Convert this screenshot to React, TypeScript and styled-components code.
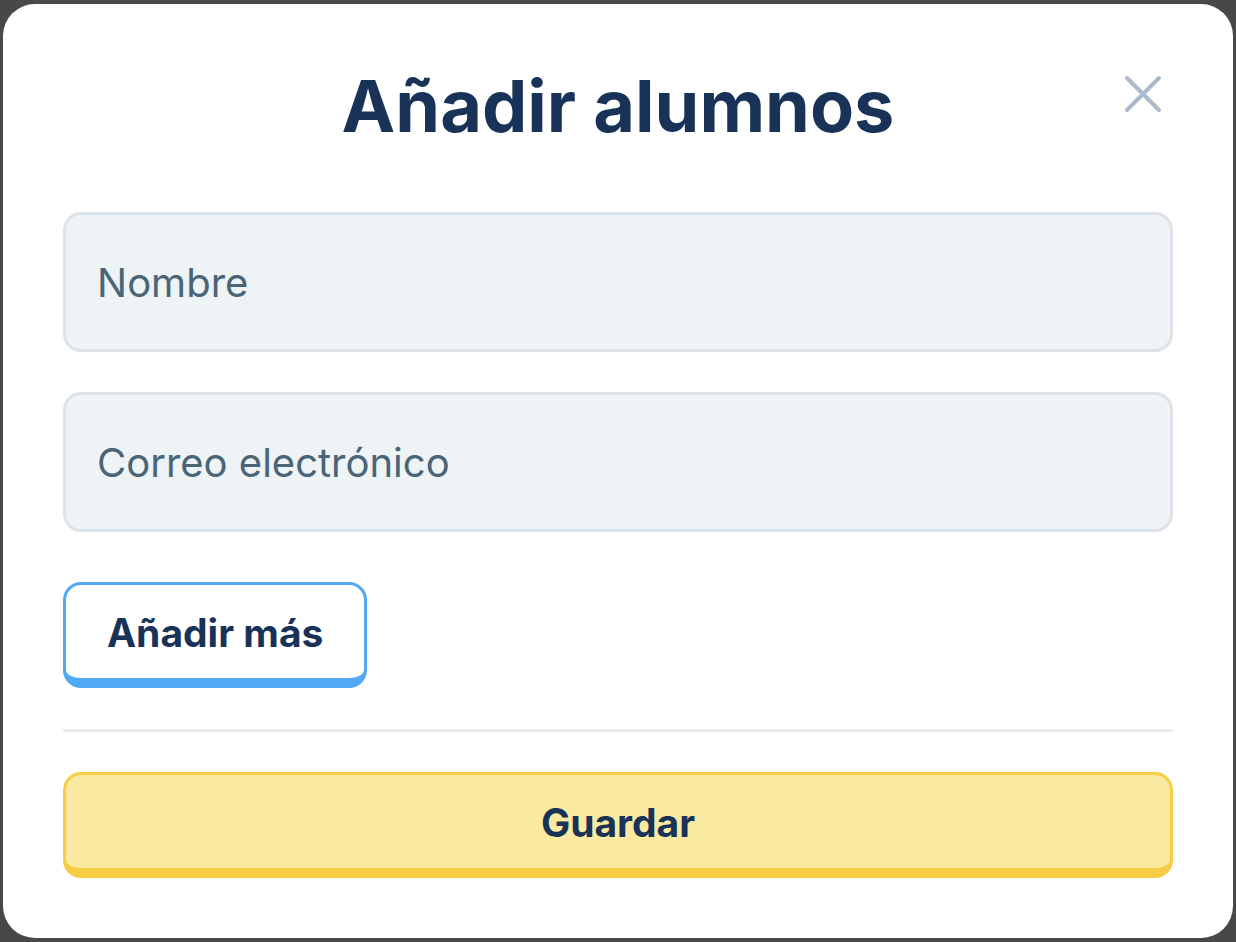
import styled, { createGlobalStyle } from 'styled-components';

const Global = createGlobalStyle`
  html, body {
    margin: 0;
    background: #484848;
  }
  body {
    padding: 4px 3px;
    font-family: Inter, "Noto Sans", sans-serif;
  }
  * {
    box-sizing: border-box;
  }
`;

const Modal = styled.div`
  position: relative;
  background: #ffffff;
  border-radius: 32px;
  height: 934px;
  padding: 66px 60px 60px;
  display: flex;
  flex-direction: column;
`;

const Title = styled.h1`
  margin: 0 0 70px;
  font-size: 72px;
  line-height: 72px;
  font-weight: 700;
  color: #183258;
  text-align: center;
`;

const Close = styled.button`
  position: absolute;
  top: 71px;
  right: 71px;
  width: 38px;
  height: 38px;
  padding: 0;
  border: none;
  background: none;
  cursor: pointer;
  display: flex;
`;

const Fields = styled.div`
  display: flex;
  flex-direction: column;
  gap: 40px;
`;

const Input = styled.input`
  height: 140px;
  width: 100%;
  border: 3px solid #dde3e8;
  border-radius: 18px;
  background: #eef3f6;
  padding: 0 31px;
  font-family: Inter, "Noto Sans", sans-serif;
  font-size: 40px;
  color: #183258;
  outline: none;

  &::placeholder {
    color: #4a6478;
    opacity: 1;
  }
`;

const Button = styled.button<{ $variant: 'outline' | 'primary' }>`
  height: 106px;
  border: 3px solid ${(p) => (p.$variant === 'primary' ? '#f7cd45' : '#4fa9f4')};
  border-bottom-width: 10px;
  border-radius: 18px;
  background: ${(p) => (p.$variant === 'primary' ? '#fae9a0' : '#ffffff')};
  font-family: Inter, "Noto Sans", sans-serif;
  font-size: 39px;
  font-weight: 700;
  color: #183258;
  cursor: pointer;
  padding: 2px 41px 0;
`;

const MoreRow = styled.div`
  margin-top: 50px;
  display: flex;
`;

const Divider = styled.hr`
  margin: 41px 0 40px;
  border: none;
  height: 3px;
  background: #e8ecef;
`;

const App = () => {
  return (
    <>
      <Global />
      <Modal>
        <Title>Añadir alumnos</Title>
        <Close aria-label="Cerrar">
          <svg width="38" height="38" viewBox="0 0 38 38" fill="none">
            <path
              d="M3 3L35 35M35 3L3 35"
              stroke="#abbacb"
              strokeWidth="4"
              strokeLinecap="round"
            />
          </svg>
        </Close>
        <Fields>
          <Input placeholder="Nombre" />
          <Input placeholder="Correo electrónico" />
        </Fields>
        <MoreRow>
          <Button $variant="outline">Añadir más</Button>
        </MoreRow>
        <Divider />
        <Button $variant="primary">Guardar</Button>
      </Modal>
    </>
  );
};

export default App;
